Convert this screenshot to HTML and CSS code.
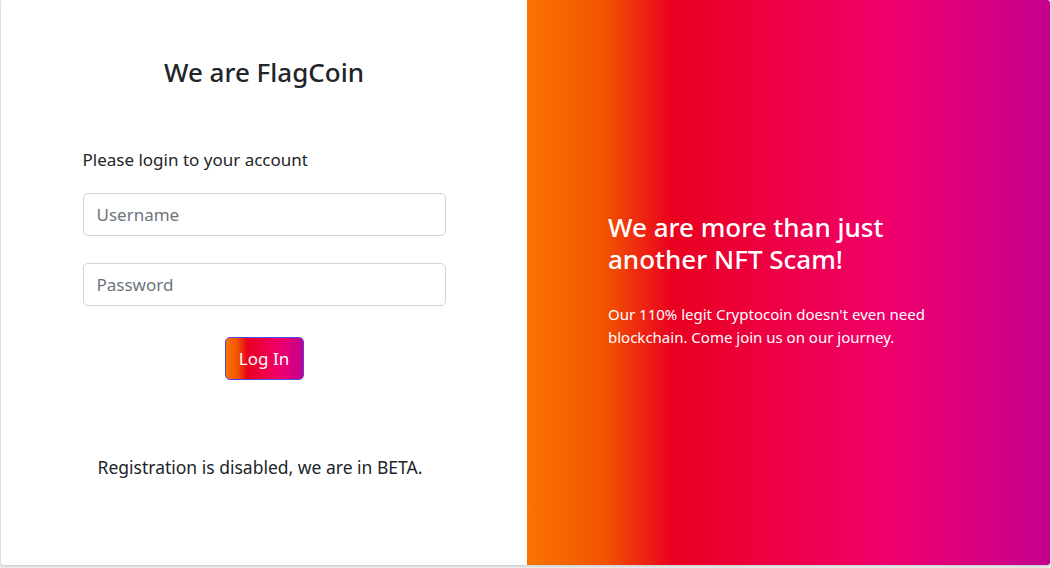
FILE: index.html
```html
<!DOCTYPE html>
<html lang="en">
<head>
<meta charset="utf-8">
<title>FlagCoin Login</title>
<link rel="stylesheet" href="styles.css">
</head>
<body>
<div class="card">
  <section class="left">
    <h1 class="title">We are FlagCoin</h1>
    <form class="form">
      <p class="lead">Please login to your account</p>
      <input class="field" type="text" placeholder="Username">
      <input class="field" type="password" placeholder="Password">
      <div class="actions">
        <button class="btn" type="button">Log In</button>
      </div>
    </form>
    <p class="note">Registration is disabled, we are in BETA.</p>
  </section>
  <section class="right">
    <div class="pitch">
      <h2 class="pitch-title">We are more than just another NFT Scam!</h2>
      <p class="pitch-text">Our 110% legit Cryptocoin doesn't even need blockchain. Come join us on our journey.</p>
    </div>
  </section>
</div>
</body>
</html>
```

FILE: styles.css
```css
* { box-sizing: border-box; }
html, body { margin: 0; padding: 0; }
body {
  background: #eeeeee;
  font-family: "Noto Sans", "Open Sans", sans-serif;
  color: #212529;
  height: 568px;
  overflow: hidden;
}
.card {
  width: 1049px;
  height: 565px;
  margin-left: 1px;
  background: #fff;
  border-radius: 3px;
  box-shadow: 0 1px 3px rgba(0,0,0,0.18);
  display: flex;
  overflow: hidden;
}
.left {
  width: 526px;
  display: flex;
  flex-direction: column;
  align-items: center;
}
.title {
  margin: 55px 0 0;
  font-size: 26px;
  font-weight: 500;
  line-height: 34px;
  color: #212529;
}
.form {
  width: 363px;
  margin: 60px 0 0 0;
  display: flex;
  flex-direction: column;
}
.lead {
  margin: 0 0 22px;
  font-size: 17px;
  line-height: 22px;
}
.field {
  height: 43px;
  border: 1px solid #ced4da;
  border-radius: 5px;
  padding: 0 13px;
  font-family: inherit;
  font-size: 17px;
  color: #495057;
  margin-bottom: 27px;
}
.field::placeholder { color: #6c757d; }
.actions {
  display: flex;
  justify-content: center;
  margin-top: 4px;
}
.btn {
  width: 79px;
  height: 43px;
  border: 1px solid #5046e0;
  border-radius: 5px;
  background: linear-gradient(to right, #fa7500 0%, #f25200 15%, #ea0020 28%, #f0006a 68%, #c4008f 100%);
  color: #fff;
  font-family: inherit;
  font-size: 17px;
  padding: 0;
}
.note {
  margin: 76px 0 0 -8px;
  font-size: 17.5px;
  line-height: 22px;
}
.right {
  flex: 1;
  background: linear-gradient(to right, #fa7500 0%, #f25200 15%, #ea0020 28%, #f0006a 68%, #c4008f 100%);
  color: #fff;
  display: flex;
  align-items: center;
  padding: 0 80px 5px 81px;
}
.pitch-title {
  margin: 0 0 28px;
  font-size: 26px;
  font-weight: 500;
  line-height: 32px;
}
.pitch-text {
  margin: 0;
  font-size: 15px;
  line-height: 23px;
}
```
